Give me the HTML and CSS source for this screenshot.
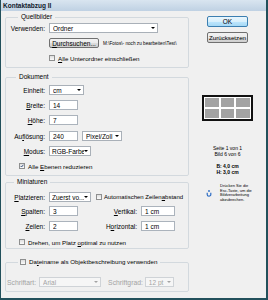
FILE: index.html
```html
<!doctype html>
<html lang="de">
<head>
<meta charset="utf-8">
<title>Kontaktabzug II</title>
<link rel="stylesheet" href="styles.css">
</head>
<body>

<div class="win">
	<div class="title">Kontaktabzug II</div>

	<div class="main">

		<div class="left">

			<!-- Quellbilder -->
			<fieldset class="grp src">
				<legend>Quellbilder</legend>
				<div class="row r1">
					<span class="lbl">Verwenden:</span>
					<div class="sel w-ordner"><span class="val">Ordner</span><span class="arr"></span></div>
				</div>
				<div class="row r2">
					<button class="btn browse"><u>D</u>urchsuchen...</button>
					<span class="path">M:\Fotos\- noch zu bearbeiten\Test\</span>
				</div>
				<div class="row r3 crow">
					<span class="chk ind"></span><span><u>A</u>lle Unterordner einschließen</span>
				</div>
			</fieldset>

			<!-- Dokument -->
			<fieldset class="grp doc">
				<legend>Dokument</legend>
				<div class="row d1"><span class="lbl">Einheit:</span><div class="sel w-cm"><span class="val">cm</span><span class="arr"></span></div></div>
				<div class="row d2"><span class="lbl"><u>B</u>reite:</span><input class="inp" value="14"></div>
				<div class="row d3"><span class="lbl"><u>H</u>öhe:</span><input class="inp" value="7"></div>
				<div class="row d4"><span class="lbl">Au<u>f</u>lösung:</span><input class="inp" value="240"><div class="sel w-res"><span class="val">Pixel/Zoll</span><span class="arr"></span></div></div>
				<div class="row d5"><span class="lbl"><u>M</u>odus:</span><div class="sel w-mode"><span class="val">RGB-Farbe</span><span class="arr"></span></div></div>
				<div class="row d6 crow">
					<span class="chk out"><svg viewBox="0 0 6 6"><path d="M1 3 L2.4 4.5 L5 1.2" /></svg></span><span>Alle <u>E</u>benen reduzieren</span>
				</div>
			</fieldset>

			<!-- Miniaturen -->
			<fieldset class="grp thumbs">
				<legend>Miniaturen</legend>
				<div class="row m1">
					<span class="lbl"><u>P</u>latzieren:</span>
					<div class="sel w-place"><span class="val">Zuerst vo...</span><span class="arr"></span></div>
					<span class="chk auto"></span><span class="small">Automatischen Zeilen<u>a</u>bstand</span>
				</div>
				<div class="row m2"><span class="lbl"><u>S</u>palten:</span><input class="inp" value="3"><span class="lbl2"><u>V</u>ertikal:</span><input class="inp w-cmv" value="1 cm"></div>
				<div class="row m3"><span class="lbl"><u>Z</u>eilen:</span><input class="inp" value="2"><span class="lbl2">H<u>o</u>rizontal:</span><input class="inp w-cmv" value="1 cm"></div>
				<div class="row m4 crow"><span class="chk out"></span><span>Drehen, um Platz <u>o</u>ptimal zu nutzen</span></div>
			</fieldset>

			<!-- Dateiname -->
			<fieldset class="grp fname">
				<legend><span class="chk"></span><span>Da<u>t</u>einame als Objektbeschreibung verwenden</span></legend>
				<div class="row f1">
					<span class="lbl3 dis">Schriftart:</span>
					<div class="sel dis w-font"><span class="val">Arial</span><span class="arr"></span></div>
					<span class="lbl4 dis">Schriftgrad:</span>
					<div class="sel dis w-size"><span class="val">12 pt</span><span class="arr"></span></div>
				</div>
			</fieldset>

		</div>

		<div class="right">
			<button class="btn ok">OK</button>
			<button class="btn reset">Zurücksetzen</button>

			<div class="preview">
				<span></span><span></span><span></span>
				<span></span><span></span><span></span>
			</div>

			<div class="stats">
				<p>Seite 1 von 1</p>
				<p>Bild 6 von 6</p>
				<p class="size first">B: 4,0 cm</p>
				<p class="size">H: 3,0 cm</p>
			</div>

			<div class="info">
				<svg class="ico" viewBox="0 0 6 7"><circle cx="3" cy="1" r="0.9" /><path d="M1.2 2.8 V4.4 A1.8 1.8 0 0 0 4.8 4.4 V2.8" /></svg>
				<p>Drücken Sie die<br>Esc-Taste, um die<br>Bildverarbeitung<br>abzubrechen.</p>
			</div>
		</div>

	</div>
</div>

</body>
</html>
```

FILE: styles.css
```css
* {box-sizing:border-box;}
body {margin:0; font-family:"Liberation Sans", Arial, sans-serif; font-size:6.5px; color:#000;}
p {margin:0;}

/* window */

.win {
	width:268px; height:300px;
	background:#f0f0f0;
	border:solid #22505b;
	border-width:0 2px 2px 1px;
	display:flex;
	flex-direction:column;
}

.title {
	height:11px;
	line-height:11px;
	padding-left:2px;
	font-size:6.5px;
	font-weight:bold;
	color:#10202c;
	background:linear-gradient(#d9e5f0,#bfd1e3);
}

.main {display:flex;}

.left {width:188px; padding:2px 0 0 4px;}

.right {
	flex:1;
	display:flex;
	flex-direction:column;
	align-items:center;
}

/* group boxes */

.grp {
	margin:0;
	padding:0 0 5px 0;
	border:1px solid #d3d9de;
	border-radius:2px;
	min-width:0;
}

.grp legend {
	margin-left:12px;
	padding:0 3px;
	line-height:8px;
}

.doc {margin-top:5px;}
.doc legend {margin-left:10px;}
.thumbs {margin-top:2px; padding-bottom:2px;}
.thumbs legend {margin-left:8px;}
.fname {margin-top:9px; padding-bottom:4px;}
.fname legend {font-size:6.2px; padding-left:2px;}

.row {display:flex; align-items:center; height:10px;}
.crow {height:8px; font-size:6.2px;}

.r1 {margin-top:2px;}
.r2 {margin-top:5px;}
.r3 {margin-top:6px;}

.d1 {margin-top:4px;}
.d2, .d3, .d5 {margin-top:5px;}
.d4 {margin-top:6px;}
.d6 {margin-top:6px;}

.m1 {margin-top:6px;}
.m2 {margin-top:4px;}
.m3 {margin-top:5px;}
.m4 {margin-top:7px;}

.f1 {margin-top:11px;}

.lbl {
	width:43px;
	padding-right:4px;
	text-align:right;
	white-space:nowrap;
	flex:none;
}

.lbl2 {
	width:63px;
	padding-right:4px;
	text-align:right;
	white-space:nowrap;
}

.lbl3 {margin-left:1px; margin-right:3px; font-size:6.8px;}
.lbl4 {margin-left:7px; margin-right:2px; font-size:6.8px;}

.small {font-size:6px; white-space:nowrap;}

.dis {color:#a3a3a3;}

/* controls */

.sel {
	display:flex;
	align-items:center;
	height:10px;
	padding:0 2px 0 3px;
	background:#fff;
	border:1px solid #a9b0b8;
	flex:none;
}

.sel .val {flex:1; white-space:nowrap; overflow:hidden;}

.arr {
	width:0; height:0;
	border-left:2px solid transparent;
	border-right:2px solid transparent;
	border-top:2px solid #000;
	flex:none;
}

.sel.dis {border-color:#cfd3d7; background:#f6f6f6;}
.sel.dis .arr {border-top-color:#a3a3a3;}

.w-ordner {width:109px;}
.w-cm {width:35px;}
.w-res {width:40px; margin-left:4px;}
.w-mode {width:42px; padding-left:2px;}
.w-place {width:42px; padding-left:2px;}
.w-font {width:62px;}
.w-size {width:29px;}

.inp {
	width:29px; height:10px;
	padding:0 0 0 3px;
	border:1px solid #abb3bc;
	background:#fff;
	font:inherit;
	outline:none;
	flex:none;
}

.w-cmv {width:34px;}

.btn {
	height:11px;
	padding:0;
	font:inherit;
	color:#000;
	border:1px solid #707070;
	border-radius:2px;
	background:linear-gradient(#f2f2f2 0,#ebebeb 50%,#dddddd 50%,#cfcfcf 100%);
}

.browse {width:50px; height:10px; margin-left:43px;}

.path {margin-left:4px; font-size:4.7px; white-space:nowrap;}

.chk {
	display:inline-block;
	width:6px; height:6px;
	border:1px solid #8e8f8f;
	background:linear-gradient(#dedede,#fbfbfb);
	margin-right:3px;
	flex:none;
	vertical-align:-1px;
}

.chk svg {display:block; width:4px; height:4px;}
.chk path {fill:none; stroke:#1c3a70; stroke-width:1.2;}

.ind {margin-left:43px;}
.out {margin-left:13px;}
.auto {margin-left:5px; margin-right:2px;}

/* right panel */

.ok {
	width:41px;
	margin-top:5px;
	border-color:#3c7fb1;
	background:linear-gradient(#eaf6fd 0,#d9f0fc 50%,#bee6fd 50%,#a7d9f5 100%);
}

.reset {width:41px; margin-top:5px; font-size:6.2px;}

.preview {
	width:51px; height:26px;
	margin-top:52px;
	padding:1px;
	border:2px solid #111;
	background:#fff;
	display:grid;
	grid-template-columns:repeat(3,1fr);
	gap:2px;
}

.preview span {background:#a3a3a3;}

.stats {margin-top:24px; font-size:5px; line-height:6px; text-align:center;}
.stats .size {font-weight:bold;}
.stats .first {margin-top:6px;}

.info {
	align-self:stretch;
	display:flex;
	padding-left:17px;
	margin-top:9px;
}

.ico {width:6px; height:7px; margin-top:6px; flex:none;}
.ico circle {fill:#2c6cc4;}
.ico path {fill:none; stroke:#2c6cc4; stroke-width:1.2;}

.info p {margin-left:8px; font-size:4px; line-height:4.7px;}
```
